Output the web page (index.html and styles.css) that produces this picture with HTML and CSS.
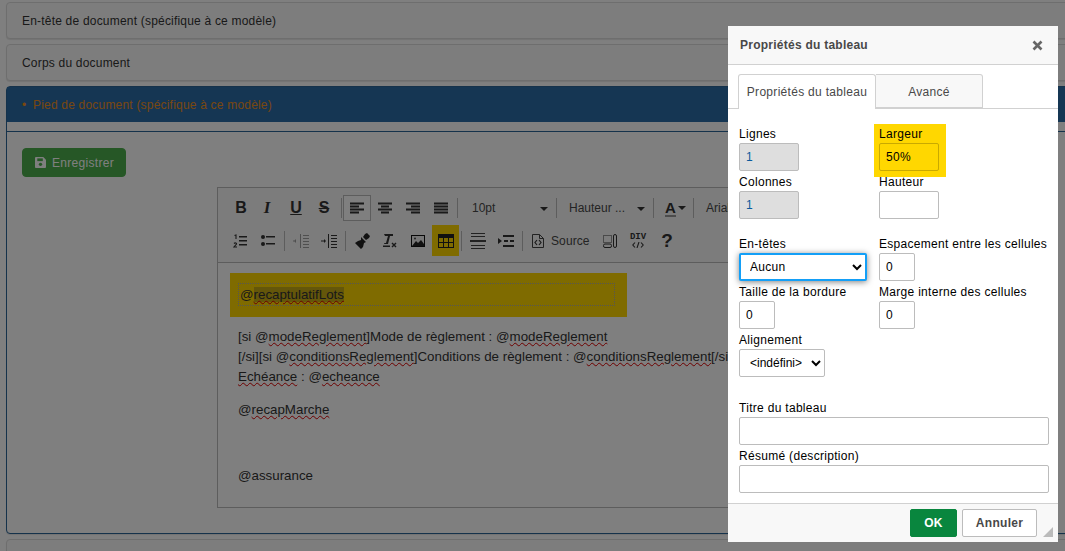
FILE: index.html

```html
<!DOCTYPE html>
<html lang="fr">
<head>
  <meta charset="UTF-8" />
  <title>Propriétés du tableau</title>
  <link rel="stylesheet" href="styles.css">
</head>
<body>
  <div class="panel"><div class="panel-title">En-tête de document (spécifique à ce modèle)</div></div>
  <div class="panel"><div class="panel-title">Corps du document</div></div>

  <div class="panel panel-open">
    <div class="panel-head"><span class="dot">•</span> Pied de document (spécifique à ce modèle)</div>
    <div class="panel-body">
      <button class="btn-save">
        <svg width="11" height="11" viewBox="0 0 12 12"><path d="M1 0h8l3 3v8a1 1 0 0 1-1 1H1a1 1 0 0 1-1-1V1a1 1 0 0 1 1-1z" fill="#fff"/><rect x="2.5" y="1.5" width="6" height="3" fill="#4cae4c"/><circle cx="6" cy="8" r="1.8" fill="#4cae4c"/></svg>
        Enregistrer
      </button>

      <div class="editor">
        <div class="toolbar">
          <div class="tb-row">
            <span class="tb tb-bold">B</span>
            <span class="tb tb-ital">I</span>
            <span class="tb tb-under">U</span>
            <span class="tb tb-strike">S</span>
            <i class="sep"></i>
            <span class="tb tb-on"><svg width="16" height="14" viewBox="0 0 16 14"><path d="M1 1h14v2H1zM1 4h9v2H1zM1 7h14v2H1zM1 10h9v2H1z" fill="#333" transform="translate(0 .5)"/></svg></span>
            <span class="tb"><svg width="16" height="14" viewBox="0 0 16 14"><path d="M1 1h14v2H1zM4 4h8v2H4zM1 7h14v2H1zM4 10h8v2H4z" fill="#333" transform="translate(0 .5)"/></svg></span>
            <span class="tb"><svg width="16" height="14" viewBox="0 0 16 14"><path d="M1 1h14v2H1zM6 4h9v2H6zM1 7h14v2H1zM6 10h9v2H6z" fill="#333" transform="translate(0 .5)"/></svg></span>
            <span class="tb"><svg width="16" height="14" viewBox="0 0 16 14"><path d="M1 1h14v2H1zM1 4h14v2H1zM1 7h14v2H1zM1 10h14v2H1z" fill="#333" transform="translate(0 .5)"/></svg></span>
            <i class="sep"></i>
            <span class="combo combo-size">10pt<b class="caret"></b></span>
            <i class="sep"></i>
            <span class="combo combo-height">Hauteur ...<b class="caret"></b></span>
            <i class="sep"></i>
            <span class="tb-color"><span class="tb-a">A</span><b class="caret"></b></span>
            <i class="sep"></i>
            <span class="combo combo-font">Arial</span>
          </div>
          <div class="tb-row">
            <span class="tb"><svg width="14" height="14" viewBox="0 0 14 14"><path d="M6 2h8v1.4H6zM6 6h8v1.4H6zM6 10h8v1.4H6z" fill="#333"/><path d="M1.500 1.500L3 1v4M1 9.500c1-1 2.800-.6 2.500.6L1 13h3" fill="none" stroke="#333" stroke-width="1.100"/></svg></span>
            <span class="tb"><svg width="14" height="14" viewBox="0 0 14 14"><path d="M5 2h9v1.600H5zM5 9h9v1.600H5z" fill="#333"/><circle cx="2" cy="3" r="2" fill="#333"/><circle cx="2" cy="10" r="2" fill="#333"/></svg></span>
            <i class="sep"></i>
            <span class="tb tb-off"><svg width="16" height="14" viewBox="0 0 16 14"><path d="M7 0h1v14H7zM10 1h6v1h-6zM10 4h6v1h-6zM10 7h6v1h-6zM10 10h6v1h-6zM10 13h6v1h-6zM0 6.500h3v1H0zM3 5v4L1 7z" fill="#333"/></svg></span>
            <span class="tb"><svg width="16" height="14" viewBox="0 0 16 14"><path d="M7 0h1v14H7zM10 1h6v1h-6zM10 4h6v1h-6zM10 7h6v1h-6zM10 10h6v1h-6zM10 13h6v1h-6zM0 6.500h3v1H0zM3 5l2 2-2 2z" fill="#333"/></svg></span>
            <i class="sep"></i>
            <span class="tb"><svg width="16" height="16" viewBox="0 0 16 16"><path d="M11 1l2-1 3 3-1 2-3 2-3-3zM7 4l5 5-2 1-1 4-2 2-6-6 3-2 3-1z" fill="#222"/></svg></span>
            <span class="tb"><svg width="16" height="16" viewBox="0 0 16 16"><path d="M2 1h9v2H8L6 11h2v0H2l.4-1H4L6 3H3z" fill="#333"/><path d="M1 12.500h7v1.500H1z" fill="#333"/><path d="M10 10l4 4M14 10l-4 4" stroke="#333" stroke-width="1.400"/></svg></span>
            <span class="tb"><svg width="14" height="12" viewBox="0 0 14 12"><rect x=".5" y=".5" width="13" height="11" fill="#eee" stroke="#111"/><path d="M1 11l4-5 2 2 3-3 3 4v2z" fill="#222"/><circle cx="4" cy="3.500" r="1" fill="#444"/></svg></span>
            <span class="tb tb-table"><svg width="16" height="14" viewBox="0 0 16 14"><rect x="0" y="0" width="16" height="14" fill="#222"/><path d="M1 4h4v4H1zM6 4h4v4H6zM11 4h4v4h-4zM1 9h4v4H1zM6 9h4v4H6zM11 9h4v4h-4z" fill="#ffd700"/></svg></span>
            <i class="sep"></i>
            <span class="tb"><svg width="16" height="16" viewBox="0 0 16 16"><path d="M1 0h14v1H1zM1 3h14v1H1zM0 7h16v2H0zM1 12h14v1H1zM1 15h14v1H1z" fill="#444"/></svg></span>
            <span class="tb"><svg width="16" height="12" viewBox="0 0 16 12"><path d="M5 0h11v2H5zM6 5h4v2H6zM12 5h4v2h-4zM5 10h11v2H5zM0 3l4 3-4 3z" fill="#333"/></svg></span>
            <i class="sep"></i>
            <span class="tb tb-doc"><svg width="12" height="14" viewBox="0 0 12 14"><path d="M.5.500h7l4 4v9H.500z" fill="none" stroke="#444"/><path d="M7.500.500v4h4" fill="none" stroke="#444"/><path d="M5 6L3 8.500 5 11M7 6l2 2.500L7 11" fill="none" stroke="#333" stroke-width="1.200"/></svg></span>
            <span class="tb-label">Source</span>
            <span class="tb tb-blocks"><svg width="14" height="14" viewBox="0 0 14 14"><path d="M.5 1.500h8v7h-8z" fill="none" stroke="#333" stroke-dasharray="1 1"/><rect x="10.500" y=".5" width="3" height="13" rx="1.500" fill="none" stroke="#333"/><rect x=".5" y="10" width="8" height="3.500" rx="1.500" fill="none" stroke="#333"/></svg></span>
            <span class="tb tb-div"><span class="div-top">DIV</span><svg width="12" height="6" viewBox="0 0 12 6"><path d="M3 .5L.8 3 3 5.500M9 .5L11.200 3 9 5.500M7 0L5 6" fill="none" stroke="#333" stroke-width="1.100"/></svg></span>
            <span class="tb tb-help">?</span>
          </div>
        </div>

        <div class="editor-body">
          <div class="hl-table">
            <div class="dash-table">@<span class="sel"><u class="sp">recaptulatifLots</u></span></div>
          </div>
          <p class="lines">[si @<u class="sp">modeReglement</u>]Mode de règlement : @<u class="sp">modeReglement</u><br>
          [/si][si @<u class="sp">conditionsReglement</u>]Conditions de règlement : @<u class="sp">conditionsReglement</u>[/si]<br>
          <u class="sp">Echéance</u> : @<u class="sp">echeance</u></p>
          <p class="lines gap1">@<u class="sp">recapMarche</u></p>
          <p class="lines gap2">@assurance</p>
        </div>
      </div>
    </div>
  </div>
  <div class="panel panel-last"></div>

  <div class="overlay"></div>

  <div class="dialog">
    <div class="dlg-title">
      <span>Propriétés du tableau</span>
      <svg class="dlg-close" width="11" height="11" viewBox="0 0 11 11"><path d="M1.500 1.500l8 8M9.500 1.500l-8 8" stroke="#666" stroke-width="2.600"/></svg>
    </div>
    <div class="tabs">
      <div class="tab tab-on">Propriétés du tableau</div>
      <div class="tab">Avancé</div>
    </div>
    <div class="form">
      <div class="grid">
        <div class="field"><label>Lignes</label><input class="w60 off" value="1"></div>
        <div class="field field-hl"><label>Largeur</label><input class="w60 hl" value="50%"></div>
        <div class="field"><label>Colonnes</label><input class="w60 off" value="1"></div>
        <div class="field"><label>Hauteur</label><input class="w60"></div>
      </div>
      <div class="grid grid-2">
        <div class="field"><label>En-têtes</label><select class="sel-head"><option>Aucun</option></select></div>
        <div class="field"><label>Espacement entre les cellules</label><input class="w36" value="0"></div>
        <div class="field"><label>Taille de la bordure</label><input class="w36" value="0"></div>
        <div class="field"><label>Marge interne des cellules</label><input class="w36" value="0"></div>
        <div class="field"><label>Alignement</label><select class="sel-align"><option>&lt;indéfini&gt;</option></select></div>
      </div>
      <div class="field field-wide"><label>Titre du tableau</label><input class="full"></div>
      <div class="field"><label>Résumé (description)</label><input class="full"></div>
    </div>
    <div class="dlg-foot">
      <button class="btn-ok">OK</button>
      <button class="btn-cancel">Annuler</button>
      <svg class="grip" width="10" height="10" viewBox="0 0 10 10"><path d="M10 0v10H0z" fill="#bbb"/></svg>
    </div>
  </div>
</body>
</html>
```

FILE: styles.css

```css
html, body {
  margin: 0;
  height: 551px;
  overflow: hidden;
}
body {
  position: relative;
  padding: 2px 6px 0;
  box-sizing: border-box;
  background: #fff;
  font-family: "Liberation Sans", Arial, sans-serif;
  font-size: 12px;
  color: #333;
}
.panel {
  border: 1px solid #ddd;
  border-radius: 4px;
  background: #fbfbfb;
  margin: 0 -10px 5px 0;
  box-shadow: 0 1px 1px rgba(0,0,0,.1);
}
.panel-title {
  height: 35px;
  line-height: 37px;
  padding-left: 15px;
  letter-spacing: .2px;
}
.panel-open {
  border: 1px solid #2a6496;
  background: #fff;
  height: 448px;
  box-sizing: border-box;
}
.panel-head {
  height: 35px;
  line-height: 37px;
  padding-left: 15px;
  background: #2a6ca6;
  color: #f0901e;
  letter-spacing: .2px;
}
.dot { margin-right: 3px; }
.panel-body {
  margin-top: 9px;
  border-top: 1px solid #2a6496;
  padding: 16px 15px 0;
}
.btn-save {
  display: flex;
  align-items: center;
  gap: 6px;
  width: 104px;
  height: 29px;
  padding: 0 0 0 12px;
  background: #4cae4c;
  border: 1px solid #4cae4c;
  border-radius: 4px;
  color: #fff;
  font: 12px "Liberation Sans", Arial, sans-serif;
  letter-spacing: .3px;
}

.editor {
  margin: 10px 0 0 195px;
  border: 1px solid #bbb;
  height: 321px;
  box-sizing: border-box;
  overflow: hidden;
  background: #fff;
}
.toolbar {
  height: 75px;
  border-bottom: 1px solid #bbb;
  background: #f8f8f8;
  padding: 7px 0 0 9px;
  box-sizing: border-box;
}
.tb-row {
  display: flex;
  align-items: center;
  height: 26px;
  white-space: nowrap;
}
.tb-row + .tb-row {
  margin: 4px 0 0 -1px;
  height: 31px;
}
.tb {
  width: 28px;
  height: 26px;
  flex: none;
  display: flex;
  flex-direction: column;
  align-items: center;
  justify-content: center;
  box-sizing: border-box;
  color: #333;
}
.tb-bold { font-weight: bold; font-size: 16px; }
.tb-ital {
  font: italic bold 17px "Liberation Serif", serif;
  margin: 0 2px 0 -2px;
}
.tb-under { font-size: 16px; font-weight: bold; text-decoration: underline; margin-left: -1px; margin-right: 1px; }
.tb-strike { font-size: 16px; font-weight: bold; text-decoration: line-through; margin-left: -1px; margin-right: 1px; }
.tb-on {
  border: 1px solid #bbb;
  background: #fff;
  margin-left: -1px;
}
.tb-off svg { opacity: .45; }
.tb-table {
  background: #ffd700;
  height: 31px;
  width: 27px;
}
.sep {
  width: 1px;
  height: 20px;
  margin: 0 2px;
  flex: none;
  background: #bbb;
}
.combo {
  flex: none;
  display: block;
  position: relative;
  box-sizing: border-box;
  color: #484848;
  font-size: 12px;
}
.combo-size { width: 94px; padding-left: 12px; }
.combo-height { width: 92px; padding-left: 10px; }
.combo-font { width: 60px; padding-left: 10px; }
.caret {
  display: inline-block;
  position: absolute;
  right: 6px;
  top: 6px;
  border: 4px solid transparent;
  border-top-color: #333;
  border-bottom: 0;
}
.tb-color {
  flex: none;
  width: 35px;
  position: relative;
  display: block;
  padding-left: 9px;
  box-sizing: border-box;
}
.tb-color .caret { right: 5px; }
.tb-a {
  display: inline-block;
  font-size: 15px;
  font-weight: bold;
  line-height: 15px;
  border-bottom: 2px solid #999;
}
.tb-label {
  flex: none;
  width: 44px;
  color: #484848;
  letter-spacing: .1px;
}
.tb-doc { width: 26px; }
.tb-blocks { margin-left: 1px; }
.tb-div { gap: 1px; }
.div-top {
  font-family: "Liberation Mono", monospace;
  font-size: 9px;
  line-height: 8px;
  font-weight: bold;
}
.tb-help {
  font-size: 19px;
  font-weight: bold;
  margin-left: 1px;
}

.editor-body {
  padding: 10px 12px 0;
  color: #333;
  font-size: 13.33px;
  line-height: 20px;
  white-space: nowrap;
}
.hl-table {
  width: 397px;
  height: 44px;
  background: #ffd700;
  box-sizing: border-box;
  padding: 10px 12px 0 8px;
}
.dash-table {
  height: 23px;
  line-height: 21px;
  border: 1px dotted #aaa;
  padding-left: 1px;
  box-sizing: border-box;
}
.sel { background: #c8ad14; }
.sp { text-decoration: underline wavy #d00 1px; text-underline-offset: 1px; }
.lines { margin: 10px 0 0 8px; }
.gap1 { margin-top: 13px; }
.gap2 { margin-top: 46px; }

.panel-last {
  height: 30px;
  margin-bottom: 0;
}

.overlay {
  position: absolute;
  inset: 0;
  background: rgba(0,0,0,.5);
}

.dialog {
  position: absolute;
  left: 728px;
  top: 26px;
  width: 330px;
  height: 516px;
  background: #fff;
  display: flex;
  flex-direction: column;
  color: #000;
}
.dlg-title {
  height: 39px;
  flex: none;
  box-sizing: border-box;
  display: flex;
  align-items: center;
  justify-content: space-between;
  padding: 0 15px 0 12px;
  background: #f8f8f8;
  border-bottom: 1px solid #d1d1d1;
  color: #484848;
  font-weight: bold;
  letter-spacing: .25px;
}
.tabs {
  display: flex;
  flex: none;
  height: 34px;
  margin-top: 9px;
  padding-left: 10px;
  border-bottom: 1px solid #d1d1d1;
}
.tab {
  width: 107px;
  height: 34px;
  box-sizing: border-box;
  text-align: center;
  line-height: 34px;
  background: #f8f8f8;
  border: 1px solid #d1d1d1;
  border-left: 0;
  border-radius: 0 3px 0 0;
  color: #484848;
  letter-spacing: .3px;
}
.tab-on {
  width: 138px;
  height: 35px;
  background: #fff;
  border-left: 1px solid #d1d1d1;
  border-bottom: 0;
  border-radius: 3px 3px 0 0;
}
.form {
  flex: 1;
  padding: 18px 9px 0 11px;
}
.grid {
  display: grid;
  grid-template-columns: 140px 1fr;
  row-gap: 4px;
}
.grid-2 { margin-top: 18px; }
.field { position: relative; }
.field label {
  display: block;
  height: 16px;
  line-height: 15px;
  letter-spacing: .3px;
  white-space: nowrap;
  color: #000;
}
.field-hl::before {
  content: "";
  position: absolute;
  left: -5px;
  top: -3px;
  width: 72px;
  height: 53px;
  background: #ffd700;
}
.field-hl > * { position: relative; }
.field-wide { margin: 24px 0 4px; }
input, select {
  display: block;
  box-sizing: border-box;
  height: 28px;
  border: 1px solid #bcbcbc;
  border-radius: 2px;
  background: #fff;
  font: 12px "Liberation Sans", Arial, sans-serif;
  color: #000;
  padding: 0 6px;
  letter-spacing: .3px;
}
.w60 { width: 60px; }
.w36 { width: 36px; }
.full { width: 310px; }
.off { background: #dedede; color: #0a5a9c; }
.hl { background: #ffd700; border-color: #c9a900; }
.sel-head {
  width: 128px;
  border: 2px solid #139ff7;
  box-shadow: 0 1px 6px rgba(0,0,0,.5);
  padding-left: 5px;
}
.sel-align { width: 86px; padding-left: 6px; letter-spacing: 0; }
.dlg-foot {
  height: 39px;
  flex: none;
  box-sizing: border-box;
  position: relative;
  display: flex;
  align-items: flex-start;
  padding: 5px 21px 0 182px;
  gap: 5px;
  background: #f8f8f8;
  border-top: 1px solid #d1d1d1;
}
.dlg-foot button {
  height: 28px;
  border-radius: 2px;
  font: bold 12px "Liberation Sans", Arial, sans-serif;
  letter-spacing: .3px;
  padding: 0;
}
.btn-ok {
  width: 47px;
  background: #09863e;
  border: 1px solid #09863e;
  color: #fff;
}
.btn-cancel {
  width: 75px;
  background: #fff;
  border: 1px solid #bcbcbc;
  color: #484848;
}
.grip {
  position: absolute;
  right: 5px;
  bottom: 5px;
}
```
